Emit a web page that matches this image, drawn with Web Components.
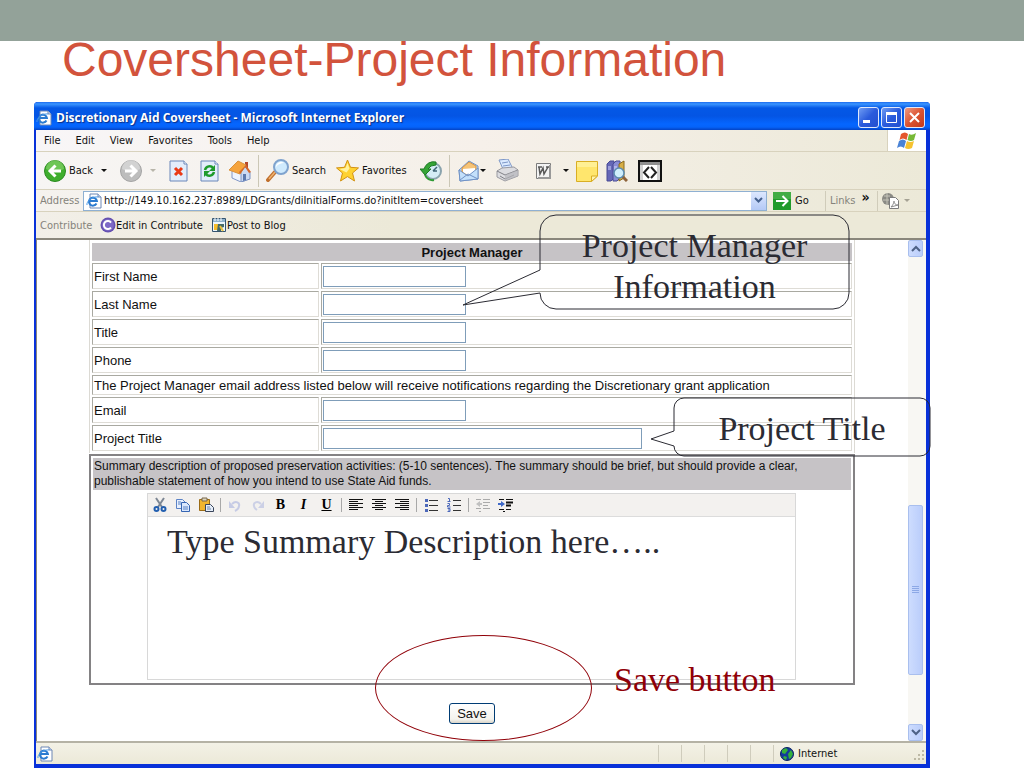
<!DOCTYPE html>
<html lang="en">
<head>
<meta charset="utf-8">
<title>Coversheet-Project Information</title>
<style>
  body {
    margin: 0;
    background: #ffffff;
    font-family: "Liberation Sans", Arial, sans-serif;
  }
</style>
</head>
<body>
<slide-page>
  <span slot="title">Coversheet-Project Information</span>
  <browser-window>
    <title-bar slot="chrome">Discretionary Aid Coversheet - Microsoft Internet Explorer</title-bar>
    <menu-bar slot="chrome"></menu-bar>
    <tool-bar slot="chrome"></tool-bar>
    <address-bar slot="chrome" url="http://149.10.162.237:8989/LDGrants/diInitialForms.do?initItem=coversheet"></address-bar>
    <contribute-bar slot="chrome"></contribute-bar>
    <project-form></project-form>
    <scroll-bar slot="scroll"></scroll-bar>
    <status-bar slot="status">Internet</status-bar>
  </browser-window>

  <call-out slot="notes" x="506" y="113" width="309" height="94" tail-x="-77" tail-y="90" from="55" to="78">Project Manager<br>Information</call-out>
  <call-out slot="notes" x="640" y="296" width="256" height="58" tail-x="-23" tail-y="41" from="33" to="48">Project Title</call-out>
  <slide-note slot="notes" x="133" y="419">Type Summary Description here…..</slide-note>
  <slide-note slot="notes" x="580" y="557" color="#900008">Save button</slide-note>
  <ring-mark slot="notes" x="341" y="533" width="217" height="106"></ring-mark>
</slide-page>

<script>
const UI_FONT = '"DejaVu Sans Condensed", "Open Sans", sans-serif';

const ICONS = {
  page: [16, `<path d="M4 1h8l3 3v11H4z" fill="#fff" stroke="#6d87b5"/><path d="M12 1v3h3" fill="#d5e2f6" stroke="#6d87b5"/><path d="M10.500 10.500a4 4 0 1 1 .4-2.500H3.500" fill="none" stroke="#2b7bd0" stroke-width="2"/><path d="M1 12C0 9 6 3 12 4" fill="none" stroke="#4c9be8"/>`],
  back: [22, `<circle cx="11" cy="11" r="10.500" fill="#3fae2e" stroke="#2b8a20"/><path d="M2 9a9 9 0 0 1 18 0q-9 5-18 0z" fill="#8ed672" opacity=".6"/><path d="M11.500 5.500 6 11l5.500 5.500M6.500 11H17" fill="none" stroke="#fff" stroke-width="3"/>`],
  forward: [22, `<circle cx="11" cy="11" r="10.500" fill="#bdbdbd" stroke="#a4a4a4"/><path d="M2 9a9 9 0 0 1 18 0q-9 5-18 0z" fill="#dcdcdc" opacity=".7"/><path d="M10.500 5.500 16 11l-5.500 5.500M15.500 11H5" fill="none" stroke="#fff" stroke-width="3"/>`],
  stop: [22, `<path d="M2 1h14l3 3v17H2z" fill="#e3edfb" stroke="#6a87b9"/><path d="M16 1v3h3" fill="#fff" stroke="#6a87b9"/><path d="m7 8 7 7m0-7-7 7" stroke="#ea3a17" stroke-width="3"/>`],
  refresh: [22, `<path d="M2 1h14l3 3v17H2z" fill="#e3edfb" stroke="#6a87b9"/><path d="M16 1v3h3" fill="#fff" stroke="#6a87b9"/><path d="M6 10c1-4 6-5 8-2M15 12c-1 4-6 5-8 2" fill="none" stroke="#1f9b2c" stroke-width="2.500"/><path d="M16 5v6h-6zM5 17v-6h6z" fill="#1f9b2c"/>`],
  home: [22, `<path d="M16 2h3v6h-3z" fill="#b5482c"/><path d="m3 11 6-5 11 5v8l-8 3-9-4z" fill="#eef3fd" stroke="#8196c5"/><path d="m12 12 4-5 5 5v7l-9 3z" fill="#cbd9f3" stroke="#7d93c3"/><path d="M0 10 9 1l8 4-6 9z" fill="#f5a33c" stroke="#d9913c"/><path d="m17 5 5 7-2 1-4-6-5 7-1-2z" fill="#d4662b"/><path d="M14 14h3v6l-3 1z" fill="#5c78ae"/>`],
  search: [23, `<path d="m9 13-7 8" stroke="#c1702e" stroke-width="4" stroke-linecap="round"/><path d="m9 13-6 7" stroke="#efb370" stroke-width="1.500"/><circle cx="15" cy="8" r="7" fill="#cfeafd" stroke="#7fa3ce" stroke-width="2"/><path d="M10 8c0-5 6-6 8-4-3 0-6 1-8 4" fill="#fff"/>`],
  star: [23, `<path d="m11.500 1 3 7.300 8 .6-6 5.100 2 8-7-4.400L4.500 22l2-8-6-5.100 8-.6z" fill="#ffd231" stroke="#d39212"/><path d="m11.500 4 2 5.500-3 4-7-3.500 6-1z" fill="#fff2a0"/>`],
  history: [22, `<circle cx="13" cy="11" r="8" fill="#d5ecf5" stroke="#8aa3ad" stroke-width="2"/><path d="m13 11 4-4m-4 4h4" stroke="#3f6475" stroke-width="1.500"/><path d="M16 2A10 10 0 0 0 4 9H0l5 6 6-6H8q2-4 8-4z" fill="#35a435" stroke="#1e7a26"/><path d="M5 15a8 8 0 0 0 9 5" fill="none" stroke="#2f9a35" stroke-width="2"/>`],
  mail: [22, `<path d="m1 10 10-9 9 5v13L2 21z" fill="#b9d6f5" stroke="#7092c6"/><path d="m4 8 7-6 7 4v6l-7 4-7-4z" fill="#f6c376" stroke="#d99846"/><path d="m5 9 12-1v4l-6 4-6-4z" fill="#fff"/><path d="m1 10 9 6 10-8v11L2 21z" fill="#c3e0fb" stroke="#7092c6"/><path d="m2 20 8-6 10 5" fill="none" stroke="#7092c6"/>`],
  print: [24, `<path d="m4 1 9-1 5 10H8z" fill="#dbeaff" stroke="#7d97c7"/><path d="m7 4 6-1m-5 4 7-1" stroke="#7d97c7"/><path d="m2 12 5-3 12-1 4 3v6l-13 5-8-4z" fill="#dcdce0" stroke="#9a9aa0"/><path d="m2 12 8 4 13-5M5 17l5 3 9-4" fill="none" stroke="#808086"/><path d="m10 16 13-5v6l-13 5z" fill="#b5b5bb" opacity=".7"/>`],
  word: [22, `<path d="M3.500 3.500h14v15h-14z" fill="#f3f3f3" stroke="#7b7b7b"/><path d="M17 5v13H5" fill="none" stroke="#999" stroke-width="2"/><path d="m6 7 1 7 3-6 1 6 4-7M5 7h4m4 0h3" fill="none" stroke="#585858" stroke-width="1.500"/>`],
  note: [22, `<path d="M.5 1.500h21V16l-6 5.500H.5z" fill="#ffe66d" stroke="#d9ae24"/><path d="M15.500 21.500V16h6z" fill="#fff4ae" stroke="#d9ae24"/><path d="M1 2h20v5H1z" fill="#fff4a5" opacity=".7"/>`],
  books: [22, `<path d="m1 4 3-3h4v17l-3 3H1z" fill="#6567b7" stroke="#484b94"/><path d="m7 4 3-3h4v17l-3 3H7z" fill="#8a8dd6" stroke="#484b94"/><path d="m13 4 5-3v17l-5 3z" fill="#d6ad45" stroke="#8a6a1d"/><path d="M2 7h3M8 7h3M2 9h3m3 0h3" stroke="#d8dafe"/><path d="m16 16 5 5" stroke="#8d633b" stroke-width="3"/><circle cx="13" cy="13" r="5" fill="#cfeefc" stroke="#5b8bb0" stroke-width="1.500"/>`],
  dev: [24, `<path d="M1 2h22v20H1z" fill="#fff" stroke="#111" stroke-width="2"/><path d="M2 3h20v3H2z" fill="#8f8f8f"/><path d="M2 6h3v15H2zm17 0h3v15h-3z" fill="#d2d2d2"/><path d="m11 8-5 5.500L11 19m2-11 5 5.500-5 5.500" fill="none" stroke="#222" stroke-width="2"/>`],
  go: [18, `<path d="M0 0h18v18H0z" fill="#209a2a"/><path d="M0 0h18v7H0z" fill="#58b957" opacity=".6"/><path d="M9.500 4 14.500 9l-5 5M14 9H3" fill="none" stroke="#fff" stroke-width="2"/>`],
  pdf: [18, `<circle cx="7" cy="7" r="6" fill="#8a8a84"/><path d="M3 4h6M2 8h6M6 1v12" stroke="#c5c4b9"/><path d="M8.500 5.500h6l3 3v8h-9z" fill="#fff" stroke="#7c7c7c"/><path d="M10 15c3-3 3-6 3-6s0 4 4 4z" fill="none" stroke="#8b8b8b"/>`],
  contribute: [16, `<circle cx="8" cy="8" r="7.500" fill="#6551b0"/><circle cx="8" cy="8" r="6" fill="#7d69c6"/><path d="M11 5.500a4 4 0 1 0 0 5" fill="none" stroke="#fff" stroke-width="2"/>`],
  blog: [16, `<path d="M1.500 1.500h13v13h-13z" fill="#edf6fc" stroke="#34546f"/><path d="M2 2h12v3H2z" fill="#8fb2cd"/><path d="M4 1v3m3-3v3m3-3v3" stroke="#fff"/><path d="M3 7h5v6H3z" fill="#f5bd2b"/><path d="M6 14 7 7h6v3l-3 1v3z" fill="#466a68"/><path d="m9 9 3 5" stroke="#e9c03b" stroke-width="2"/>`],
  globe: [14, `<circle cx="7" cy="7" r="6.500" fill="#123b9c" stroke="#0c235e"/><path d="m2 3 4-2 2 2-3 4-3-1zm6 4 3-4 2 4-2 4-2 1zM4 9l3 1-1 3-3-2z" fill="#35b13b"/>`],
  flag: [20, `<path d="M4 3q4-3 7 0L9.500 9Q6 6 2.500 9z" fill="#e4552c"/><path d="M12 3q3 2 7-1l-2 7q-3 2-6.500 0z" fill="#77b936"/><path d="M2 10q4-3 7 0l-2 7q-3-3-7 0z" fill="#4a83d6"/><path d="M10 10q3 2 7 0l-2 7q-4 2-7 0z" fill="#f6c22f"/>`],
  cut: [16, `<path d="m4 1 6 9M12 1 6 10" stroke="#7d8794" stroke-width="2"/><circle cx="4.500" cy="12" r="2" fill="none" stroke="#2460b0" stroke-width="2"/><circle cx="11.500" cy="12" r="2" fill="none" stroke="#2460b0" stroke-width="2"/>`],
  copy: [16, `<path d="M1.500 2.500h6l3 3v6h-9z" fill="#e8f0fd" stroke="#5c83c6"/><path d="M6.500 5.500h5l3 3v6h-8z" fill="#dbe8fd" stroke="#3565b3"/><path d="M3 5h3M3 7h3m2 3h5m-5 2h5" stroke="#5681c6"/>`],
  paste: [16, `<path d="M1.500 2.500h10v11h-10z" fill="#f1b52e" stroke="#9b6b15"/><path d="M4 1h5v3H4z" fill="#ddd5bd" stroke="#77674b"/><path d="M7.500 7.500h5l3 3v4h-8z" fill="#e5edf8" stroke="#39455b"/><path d="M9 10h3m-3 2h4" stroke="#6b84aa"/>`],
  undo: [16, `<path d="M5 7c4-4 8-1 7 2q0 3-4 5" fill="none" stroke="#c6cbe5" stroke-width="2"/><path d="M2 4v7h6z" fill="#c6cbe5"/>`],
  redo: [16, `<path d="M11 7C7 3 3 6 4 9q0 2 3 4" fill="none" stroke="#ccd0e6" stroke-width="2"/><path d="M14 4v7H8z" fill="#ccd0e6"/>`],
  left: [16, `<path d="M1 2.500h14M1 4.500h9M1 6.500h14M1 8.500h9M1 10.500h14M1 12.500h9" stroke="#111"/>`],
  center: [16, `<path d="M1 2.500h14M4 4.500h8M1 6.500h14M4 8.500h8M1 10.500h14M4 12.500h8" stroke="#111"/>`],
  right: [16, `<path d="M1 2.500h14M6 4.500h9M1 6.500h14M6 8.500h9M1 10.500h14M6 12.500h9" stroke="#111"/>`],
  bullets: [16, `<path d="M6 3.500h9M6 8.500h9M6 13.500h9" stroke="#333"/><path d="M2 2h3v3H2zm0 5h3v3H2zm0 5h3v3H2z" fill="#4c68ba"/>`],
  numbers: [16, `<path d="M7 3.500h8M7 8.500h8M7 13.500h8" stroke="#333"/><path d="M2 1.500h1.500v3M1.500 4.500h3M1.500 6.500h2v2h-2v1.500h3M1.500 11.500h2.500v3H1.500M2 13h2" fill="none" stroke="#4c68ba"/>`],
  outdent: [16, `<path d="M1 2.500h5m2 0h7M8 5.500h7M8 8.500h5M1 11.500h5m2 0h7M4 14.500h2" stroke="#aaa"/><path d="m1 7 4-3v2h2v2H5v2z" fill="#c0c0c0"/>`],
  indent: [16, `<path d="M1 2.500h5m2 0h7M1 12.500h5m2 0h5M5 14.500h2" stroke="#111"/><path d="M8 5.500h7M8 8.500h5" stroke="#111" stroke-width="2"/><path d="M7 7 3 4v2H0v2h3v2z" fill="#3f69c9"/>`]
};

class XpIcon extends HTMLElement {
  constructor() {
    super();
    this.attachShadow({ mode: 'open' });
  }

  connectedCallback() {
    const [size, body] = ICONS[this.getAttribute('name')];
    this.shadowRoot.innerHTML = `
      <style>
        :host { display: inline-block; flex: none; line-height: 0; }
      </style>
      <svg width="${size}" height="${size}" viewBox="0 0 ${size} ${size}" aria-hidden="true">${body}</svg>
    `;
  }
}
customElements.define('xp-icon', XpIcon);

class SlidePage extends HTMLElement {
  constructor() {
    super();
    this.attachShadow({ mode: 'open' }).innerHTML = `
      <style>
        :host { display: block; }
        .band { height: 41px; background: #93a299; }
        h1 {
          margin: -5px 0 18px;
          padding-left: 62px;
          font-size: 48px;
          line-height: 48px;
          font-weight: normal;
          color: #d2533c;
        }
        .stage { position: relative; margin: 0 94px 0 34px; }
      </style>
      <div class="band"></div>
      <h1><slot name="title"></slot></h1>
      <div class="stage">
        <slot></slot>
        <slot name="notes"></slot>
      </div>
    `;
  }
}
customElements.define('slide-page', SlidePage);

class BrowserWindow extends HTMLElement {
  constructor() {
    super();
    this.attachShadow({ mode: 'open' }).innerHTML = `
      <style>
        :host {
          display: block;
          border: solid #0831d9;
          border-width: 0 4px 4px 2px;
          border-radius: 4px 4px 0 0;
          background: #0831d9;
        }
        .view {
          display: flex;
          border-top: 2px solid #8a877c;
          border-left: 1px solid #8a877c;
          background: #fff;
        }
        main { flex: 1; min-width: 0; }
      </style>
      <slot name="chrome"></slot>
      <div class="view">
        <main><slot></slot></main>
        <slot name="scroll"></slot>
      </div>
      <slot name="status"></slot>
    `;
  }
}
customElements.define('browser-window', BrowserWindow);

class TitleBar extends HTMLElement {
  constructor() {
    super();
    this.attachShadow({ mode: 'open' }).innerHTML = `
      <style>
        :host {
          display: flex;
          align-items: center;
          gap: 4px;
          height: 28px;
          margin: 0 -4px 0 -2px;
          padding: 3px 5px 0 2px;
          box-sizing: border-box;
          border-radius: 4px 4px 0 0;
          background: linear-gradient(#1c6bee, #3a95ff 2px, #0458e6 6px, #0455e4 14px, #0566ff 22px, #0563fa 25px, #0443c4);
          color: #fff;
          font: bold 12px "Open Sans", sans-serif;
          text-shadow: 1px 1px 1px #0c2f86;
        }
        .text { flex: 1; }
        .buttons { display: flex; gap: 2px; }
        button {
          width: 21px;
          height: 21px;
          padding: 0;
          border: 1px solid #dfe8fb;
          border-radius: 3px;
          background: linear-gradient(135deg, #6f9cf3, #2a5bdc 50%, #2350cf);
          line-height: 0;
        }
        .close { background: linear-gradient(135deg, #ee9a82, #dc5432 50%, #c2391a); }
      </style>
      <xp-icon name="page"></xp-icon>
      <span class="text"><slot></slot></span>
      <div class="buttons">
        <button aria-label="Minimize"><svg width="19" height="19"><path d="M4 12h7v3H4z" fill="#fff"/></svg></button>
        <button aria-label="Maximize"><svg width="19" height="19"><path d="M4.500 5h10v9.500h-10z" fill="none" stroke="#fff"/><path d="M4 4h11v3H4z" fill="#fff"/></svg></button>
        <button class="close" aria-label="Close"><svg width="19" height="19"><path d="m5 5 9 9m0-9-9 9" stroke="#fff" stroke-width="2"/></svg></button>
      </div>
    `;
  }
}
customElements.define('title-bar', TitleBar);

class MenuBar extends HTMLElement {
  constructor() {
    super();
    const items = ['File', 'Edit', 'View', 'Favorites', 'Tools', 'Help'];
    this.attachShadow({ mode: 'open' }).innerHTML = `
      <style>
        :host {
          display: flex;
          justify-content: space-between;
          height: 22px;
          box-sizing: border-box;
          border-bottom: 1px solid #d8d2bd;
          background: linear-gradient(90deg, #f8f6f7, #f6f0ea 50%, #ece9d8);
        }
        nav { display: flex; gap: 15px; padding-left: 8px; }
        button { border: 0; padding: 0; background: none; color: #111; font: 11px ${UI_FONT}; }
        .flag {
          display: flex;
          align-items: center;
          justify-content: center;
          width: 38px;
          background: #fff;
          border-left: 1px solid #d8d2bd;
        }
      </style>
      <nav>${items.map(item => `<button>${item}</button>`).join('')}</nav>
      <div class="flag"><xp-icon name="flag"></xp-icon></div>
    `;
  }
}
customElements.define('menu-bar', MenuBar);

class ToolBar extends HTMLElement {
  constructor() {
    super();
    this.attachShadow({ mode: 'open' }).innerHTML = `
      <style>
        :host {
          display: grid;
          grid-template-columns: 76px 48px 31px 30px 29px 8px 70px 84px 29px 9px 37px 38px 43px 30px 32px 26px;
          align-items: center;
          height: 38px;
          box-sizing: border-box;
          padding-left: 8px;
          border-bottom: 1px solid #d8d2bd;
          background: linear-gradient(90deg, #f7f5f4, #f5f0e8 50%, #ece9d8);
        }
        button {
          display: flex;
          align-items: center;
          gap: 3px;
          padding: 0;
          border: 0;
          background: none;
          color: #111;
          font: 11px ${UI_FONT};
        }
        i { width: 1px; height: 32px; background: #cbc7b6; }
        .drop::after {
          content: "";
          margin-left: 5px;
          border: 3px solid transparent;
          border-top-color: #111;
          border-bottom: 0;
        }
        .tight { gap: 0; }
        .tight::after { margin-left: 0; }
        .off::after { border-top-color: #b8b5aa; }
      </style>
      <button class="drop"><xp-icon name="back"></xp-icon>Back</button>
      <button class="drop off" aria-label="Forward"><xp-icon name="forward"></xp-icon></button>
      <button aria-label="Stop"><xp-icon name="stop"></xp-icon></button>
      <button aria-label="Refresh"><xp-icon name="refresh"></xp-icon></button>
      <button aria-label="Home"><xp-icon name="home"></xp-icon></button>
      <i></i>
      <button><xp-icon name="search"></xp-icon>Search</button>
      <button><xp-icon name="star"></xp-icon>Favorites</button>
      <button aria-label="History"><xp-icon name="history"></xp-icon></button>
      <i></i>
      <button class="drop tight" aria-label="Mail"><xp-icon name="mail"></xp-icon></button>
      <button aria-label="Print"><xp-icon name="print"></xp-icon></button>
      <button class="drop" aria-label="Edit with Word"><xp-icon name="word"></xp-icon></button>
      <button aria-label="Discuss"><xp-icon name="note"></xp-icon></button>
      <button aria-label="Research"><xp-icon name="books"></xp-icon></button>
      <button aria-label="Developer view"><xp-icon name="dev"></xp-icon></button>
    `;
  }
}
customElements.define('tool-bar', ToolBar);

class AddressBar extends HTMLElement {
  constructor() {
    super();
    this.attachShadow({ mode: 'open' });
  }

  connectedCallback() {
    this.shadowRoot.innerHTML = `
      <style>
        :host {
          display: flex;
          align-items: center;
          height: 22px;
          box-sizing: border-box;
          padding-left: 4px;
          background: linear-gradient(90deg, #f5f2ee, #ece9d8);
          border-bottom: 1px solid #d8d2bd;
          color: #111;
          font: 11px ${UI_FONT};
        }
        label, .links { color: #85837b; }
        label { width: 43px; }
        .field {
          flex: 1;
          display: flex;
          align-items: center;
          gap: 2px;
          height: 20px;
          box-sizing: border-box;
          padding: 0 0 0 2px;
          border: 1px solid #8fb0d2;
          background: #fff;
        }
        input {
          flex: 1;
          min-width: 0;
          border: 0;
          padding: 0;
          background: none;
          color: #111;
          font: inherit;
        }
        button { border: 0; padding: 0; background: none; font: inherit; color: inherit; }
        .arrow {
          width: 15px;
          height: 18px;
          background: linear-gradient(#dce7fe, #b4c9f6);
          line-height: 0;
        }
        .go { display: flex; align-items: center; gap: 4px; width: 52px; margin-left: 6px; }
        .links, .pdf {
          display: flex;
          align-items: center;
          height: 20px;
          box-sizing: border-box;
          border-left: 1px solid #d0ccba;
        }
        .links { gap: 6px; width: 52px; padding-left: 4px; }
        .links b { color: #111; font-size: 14px; line-height: 14px; padding-bottom: 8px; }
        .pdf { gap: 5px; width: 49px; padding-left: 3px; }
        .pdf::after { content: ""; border: 3px solid transparent; border-top-color: #a5a294; border-bottom: 0; }
      </style>
      <label for="url">Address</label>
      <div class="field">
        <xp-icon name="page"></xp-icon>
        <input id="url" value="${this.getAttribute('url')}">
        <button class="arrow" aria-label="Show addresses"><svg width="9" height="7"><path d="m1 1 3.500 3.500L8 1" fill="none" stroke="#44608e" stroke-width="2"/></svg></button>
      </div>
      <button class="go"><xp-icon name="go"></xp-icon>Go</button>
      <div class="links">Links <b>»</b></div>
      <div class="pdf"><xp-icon name="pdf"></xp-icon></div>
    `;
  }
}
customElements.define('address-bar', AddressBar);

class ContributeBar extends HTMLElement {
  constructor() {
    super();
    this.attachShadow({ mode: 'open' }).innerHTML = `
      <style>
        :host {
          display: flex;
          align-items: center;
          height: 26px;
          box-sizing: border-box;
          padding: 0 4px;
          background: linear-gradient(90deg, #f2efe8, #ece9d8 40%);
          font: 11px ${UI_FONT};
          color: #85837b;
        }
        span { width: 60px; }
        button {
          display: flex;
          align-items: center;
          margin-right: 8px;
          padding: 0;
          border: 0;
          background: none;
          color: #111;
          font: inherit;
        }
      </style>
      <span>Contribute</span>
      <button><xp-icon name="contribute"></xp-icon>Edit in Contribute</button>
      <button><xp-icon name="blog"></xp-icon>Post to Blog</button>
    `;
  }
}
customElements.define('contribute-bar', ContributeBar);

class ProjectForm extends HTMLElement {
  constructor() {
    super();
    const row = (id, label, wide) => `
      <tr>
        <th scope="row"><label for="${id}">${label}</label></th>
        <td><input id="${id}" type="text"${wide ? ' class="wide"' : ''}></td>
      </tr>`;
    this.attachShadow({ mode: 'open' }).innerHTML = `
      <style>
        :host {
          display: block;
          padding: 0 53px 17px 52px;
          font-size: 13px;
          line-height: 15px;
          color: #111;
        }
        table {
          width: 100%;
          table-layout: fixed;
          border-spacing: 2px;
          border: solid #dcdad4;
          border-width: 0 1px;
          padding-top: 1px;
        }
        col:first-child { width: 227px; }
        th, td {
          height: 26px;
          box-sizing: border-box;
          padding: 0 1px;
          border: 1px solid;
          border-color: #a9a9a1 #dedcd6 #dedcd6 #a9a9a1;
          text-align: left;
          font-weight: normal;
        }
        thead th { height: 18px; background: #c6c3c6; border-color: #c6c3c6; text-align: center; font-weight: bold; }
        .note { height: 20px; }
        input {
          display: block;
          width: 143px;
          height: 21px;
          box-sizing: border-box;
          border: 1px solid #7f9db9;
          background: #fff;
        }
        .wide { width: 319px; }
        .summary {
          height: 231px;
          display: flex;
          flex-direction: column;
          box-sizing: border-box;
          margin-top: 1px;
          padding: 2px 2px 3px;
          border: 2px solid #848284;
        }
        .summary > label { display: block; padding: 1px 1px; background: #c6c3c6; font-size: 12px; }
        rich-editor { flex: 1; margin: 3px 55px 0 54px; }
        .actions { display: flex; justify-content: center; margin-top: 18px; }
        .save {
          height: 21px;
          padding: 0 7px;
          border: 1px solid #003c74;
          border-radius: 3px;
          background: linear-gradient(#fff, #f4f3ee 80%, #d9d4c8);
          color: #111;
          font: 13px "Liberation Sans", Arial, sans-serif;
        }
      </style>
      <table>
        <colgroup><col><col></colgroup>
        <thead><tr><th colspan="2">Project Manager</th></tr></thead>
        <tbody>
          ${row('first', 'First Name')}
          ${row('last', 'Last Name')}
          ${row('title', 'Title')}
          ${row('phone', 'Phone')}
          <tr><td class="note" colspan="2">The Project Manager email address listed below will receive notifications regarding the Discretionary grant application</td></tr>
          ${row('email', 'Email')}
          ${row('project', 'Project Title', true)}
        </tbody>
      </table>
      <div class="summary">
        <label>Summary description of proposed preservation activities: (5-10 sentences). The summary should be brief, but should provide a clear, publishable statement of how you intend to use State Aid funds.</label>
        <rich-editor></rich-editor>
      </div>
      <div class="actions"><button class="save">Save</button></div>
    `;
  }

  // the text area sits in the editor's own tree, so the label focuses it by hand
  connectedCallback() {
    this.shadowRoot.querySelector('.summary > label').addEventListener('click', () => {
      this.shadowRoot.querySelector('rich-editor').focus();
    });
  }
}
customElements.define('project-form', ProjectForm);

class RichEditor extends HTMLElement {
  constructor() {
    super();
    const icon = name => `<button aria-label="${name}"><xp-icon name="${name}"></xp-icon></button>`;
    this.attachShadow({ mode: 'open' }).innerHTML = `
      <style>
        :host { display: flex; flex-direction: column; border: 1px solid #d8d8d8; }
        .tools {
          display: flex;
          align-items: center;
          height: 22px;
          background: #f3f1ef;
          border-bottom: 1px solid #dcdcdc;
        }
        button {
          display: flex;
          justify-content: center;
          width: 23px;
          padding: 0;
          border: 0;
          background: none;
          color: #000;
          font: bold 14px "Liberation Serif", serif;
        }
        i { width: 1px; height: 14px; margin: 0 2px 0 3px; background: #a8a8a8; }
        textarea { flex: 1; border: 0; padding: 4px; resize: none; background: none; }
      </style>
      <div class="tools">
        ${['cut', 'copy', 'paste'].map(icon).join('')}<i></i>
        ${['undo', 'redo'].map(icon).join('')}
        <button>B</button><button><em>I</em></button><button><u>U</u></button><i></i>
        ${['left', 'center', 'right'].map(icon).join('')}<i></i>
        ${['bullets', 'numbers'].map(icon).join('')}<i></i>
        ${['outdent', 'indent'].map(icon).join('')}
      </div>
      <textarea aria-label="Summary description"></textarea>
    `;
  }

  focus() {
    this.shadowRoot.querySelector('textarea').focus();
  }
}
customElements.define('rich-editor', RichEditor);

class ScrollBar extends HTMLElement {
  constructor() {
    super();
    this.attachShadow({ mode: 'open' }).innerHTML = `
      <style>
        :host {
          display: grid;
          grid-template-rows: 17px 249fr 171fr 49fr 17px;
          width: 15px;
          padding-right: 3px;
          background: #f8f7f3;
        }
        button, .thumb {
          padding: 0;
          border: 1px solid #a9bfee;
          border-radius: 2px;
          background: linear-gradient(90deg, #cddcfe, #bacdfb);
          line-height: 0;
        }
        .thumb { grid-row: 3; display: flex; align-items: center; justify-content: center; }
        .down { grid-row: 5; }
      </style>
      <button aria-label="Scroll up"><svg width="10" height="8"><path d="m1 6 4-4 4 4" fill="none" stroke="#4d6185" stroke-width="2"/></svg></button>
      <div class="thumb"><svg width="8" height="8"><path d="M0 .5h7m-7 2h7m-7 2h7m-7 2h7" stroke="#8ca8e6"/></svg></div>
      <button class="down" aria-label="Scroll down"><svg width="10" height="8"><path d="m1 2 4 4 4-4" fill="none" stroke="#4d6185" stroke-width="2"/></svg></button>
    `;
  }
}
customElements.define('scroll-bar', ScrollBar);

class StatusBar extends HTMLElement {
  constructor() {
    super();
    this.attachShadow({ mode: 'open' }).innerHTML = `
      <style>
        :host {
          display: flex;
          align-items: center;
          height: 23px;
          box-sizing: border-box;
          border-top: 2px solid #b5b2a5;
          background: linear-gradient(#f3f1e6, #ece9d8);
          font: 11px ${UI_FONT};
          color: #111;
        }
        .state { flex: 1; padding-left: 1px; line-height: 0; }
        .cell { width: 22px; height: 17px; border-left: 1px solid #cfccbc; box-sizing: border-box; margin-right: 1px; }
        .zone {
          display: flex;
          align-items: center;
          gap: 4px;
          width: 153px;
          height: 17px;
          box-sizing: border-box;
          padding-left: 6px;
          border-left: 1px solid #cfccbc;
        }
        .zone svg { margin-left: auto; align-self: flex-end; }
      </style>
      <div class="state"><xp-icon name="page"></xp-icon></div>
      ${'<div class="cell"></div>'.repeat(5)}
      <div class="zone">
        <xp-icon name="globe"></xp-icon><slot></slot>
        <svg width="13" height="13"><path d="M9 1h2v2H9zM5 5h2v2H5zm4 0h2v2H9zM1 9h2v2H1zm4 0h2v2H5zm4 0h2v2H9z" fill="#bdb9a5"/></svg>
      </div>
    `;
  }
}
customElements.define('status-bar', StatusBar);

// speech bubble with its tail on the left edge
class CallOut extends HTMLElement {
  constructor() {
    super();
    this.attachShadow({ mode: 'open' });
  }

  connectedCallback() {
    const n = name => Number(this.getAttribute(name));
    const w = n('width');
    const h = n('height');
    const r = h > 80 ? 16 : 10;
    this.shadowRoot.innerHTML = `
      <style>
        :host {
          position: absolute;
          left: ${n('x')}px;
          top: ${n('y')}px;
          width: ${w}px;
          height: ${h}px;
          box-sizing: border-box;
          padding-top: 10px;
          text-align: center;
          color: #2b2b33;
          font: 34px/41px "Liberation Serif", serif;
          pointer-events: none;
        }
        svg { position: absolute; left: 0; top: 0; overflow: visible; }
      </style>
      <svg width="${w}" height="${h}" aria-hidden="true">
        <path d="M0 ${n('from')}V${r}A${r} ${r} 0 0 1 ${r} 0H${w - r}A${r} ${r} 0 0 1 ${w} ${r}V${h - r}A${r} ${r} 0 0 1 ${w - r} ${h}H${r}A${r} ${r} 0 0 1 0 ${h - r}V${n('to')}L${n('tail-x')} ${n('tail-y')}Z" fill="none" stroke="#2b2b33"/>
      </svg>
      <slot></slot>
    `;
  }
}
customElements.define('call-out', CallOut);

class SlideNote extends HTMLElement {
  constructor() {
    super();
    this.attachShadow({ mode: 'open' });
  }

  connectedCallback() {
    this.shadowRoot.innerHTML = `
      <style>
        :host {
          position: absolute;
          left: ${this.getAttribute('x')}px;
          top: ${this.getAttribute('y')}px;
          white-space: nowrap;
          color: ${this.getAttribute('color') || '#2b2b33'};
          font: 34px/41px "Liberation Serif", serif;
          pointer-events: none;
        }
      </style>
      <slot></slot>
    `;
  }
}
customElements.define('slide-note', SlideNote);

class RingMark extends HTMLElement {
  constructor() {
    super();
    this.attachShadow({ mode: 'open' });
  }

  connectedCallback() {
    this.shadowRoot.innerHTML = `
      <style>
        :host {
          position: absolute;
          left: ${this.getAttribute('x')}px;
          top: ${this.getAttribute('y')}px;
          width: ${this.getAttribute('width')}px;
          height: ${this.getAttribute('height')}px;
          box-sizing: border-box;
          border: 1px solid #900008;
          border-radius: 50%;
          pointer-events: none;
        }
      </style>
    `;
  }
}
customElements.define('ring-mark', RingMark);
</script>
</body>
</html>
